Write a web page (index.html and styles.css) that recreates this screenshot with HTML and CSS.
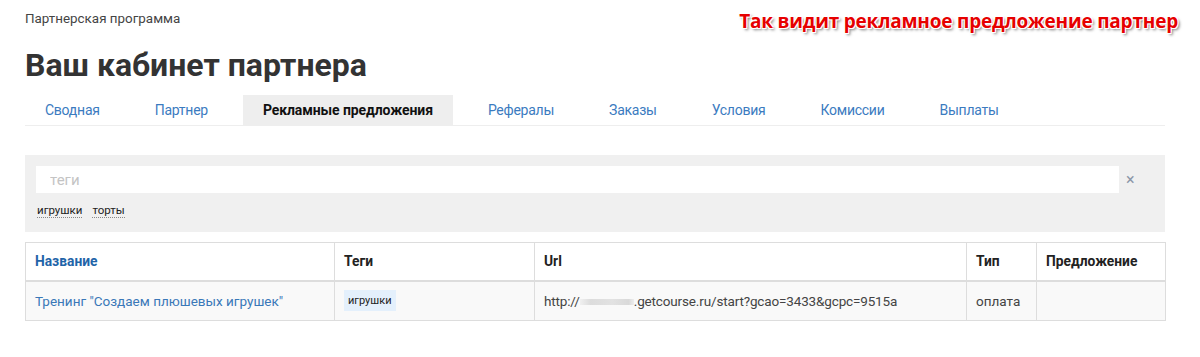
FILE: index.html
```html
<!DOCTYPE html>
<html lang="ru">
<head>
<meta charset="utf-8">
<title>Ваш кабинет партнера</title>
<link rel="stylesheet" href="styles.css">
</head>
<body>
<div class="page">
  <div class="note">Так видит рекламное предложение партнер</div>
  <div class="crumb">Партнерская программа</div>
  <h1 class="title">Ваш кабинет партнера</h1>
  <nav class="tabs">
    <a class="tab">Сводная</a>
    <a class="tab">Партнер</a>
    <a class="tab active">Рекламные предложения</a>
    <a class="tab">Рефералы</a>
    <a class="tab">Заказы</a>
    <a class="tab">Условия</a>
    <a class="tab">Комиссии</a>
    <a class="tab">Выплаты</a>
  </nav>
  <div class="filter">
    <div class="filter-row">
      <input class="filter-input" type="text" placeholder="теги">
      <span class="clear">×</span>
    </div>
    <div class="filter-tags">
      <span class="ftag">игрушки</span>
      <span class="ftag">торты</span>
    </div>
  </div>
  <table class="grid">
    <colgroup>
      <col class="c1"><col class="c2"><col class="c3"><col class="c4"><col class="c5">
    </colgroup>
    <thead>
      <tr>
        <th class="sort">Название</th>
        <th>Теги</th>
        <th>Url</th>
        <th>Тип</th>
        <th>Предложение</th>
      </tr>
    </thead>
    <tbody>
      <tr>
        <td><a class="link">Тренинг "Создаем плюшевых игрушек"</a></td>
        <td><span class="badge">игрушки</span></td>
        <td class="url">http://<span class="blur"></span>.getcourse.ru/start?gcao=3433&amp;gcpc=9515a</td>
        <td>оплата</td>
        <td></td>
      </tr>
    </tbody>
  </table>
</div>
</body>
</html>
```
FILE: styles.css
```css
* { box-sizing: border-box; }
html, body { margin: 0; padding: 0; background: #fff; }
body {
  font-family: Roboto, "Liberation Sans", Arial, sans-serif;
  color: #333;
}
.page {
  position: relative;
  padding: 10px 35px 0 25px;
}
.note {
  position: absolute;
  top: 8px;
  right: 22px;
  font-family: "Open Sans", "Liberation Sans", sans-serif;
  font-weight: 700;
  font-size: 19px;
  letter-spacing: -0.2px;
  color: #e60000;
  text-shadow: -1px -1px 0 #fff, 1px -1px 0 #fff, -1px 1px 0 #fff, 1px 1px 0 #fff,
    2px 2px 3px rgba(0,0,0,0.55);
}
.crumb {
  font-size: 13.4px;
  line-height: 18px;
  color: #444;
}
.title {
  margin: 19px 0 12px;
  font-size: 32px;
  line-height: 36px;
  font-weight: 700;
  color: #333;
}
.tabs {
  display: flex;
  gap: 15px;
  border-bottom: 1px solid #eee;
}
.tab {
  display: block;
  padding: 0 20px;
  height: 30px;
  line-height: 30px;
  font-size: 14px;
  letter-spacing: -0.25px;
  color: #3b7bbf;
}
.tab.active {
  background: #eee;
  color: #111;
  font-weight: 700;
  letter-spacing: -0.1px;
}
.filter {
  margin-top: 29px;
  background: #f0f0f0;
  padding: 11px 0 0 11px;
  height: 77px;
}
.filter-row {
  display: flex;
  align-items: center;
}
.filter-input {
  width: 1083px;
  height: 27px;
  border: 0;
  outline: 0;
  padding: 0 14px;
  background: #fff;
  font-family: inherit;
  font-size: 15px;
  color: #333;
}
.filter-input::placeholder { color: #c4c4c4; }
.clear {
  margin-left: 7px;
  font-size: 16px;
  line-height: 16px;
  color: #8a96a8;
}
.filter-tags {
  display: flex;
  gap: 10px;
  margin-top: 10px;
  padding-left: 1px;
}
.ftag {
  font-size: 11.5px;
  line-height: 14px;
  color: #222;
  border-bottom: 1px dotted #888;
}
.grid {
  margin-top: 10px;
  width: 1140px;
  border-collapse: collapse;
  table-layout: fixed;
  font-size: 13.5px;
}
.c1 { width: 309px; }
.c2 { width: 200px; }
.c3 { width: 432px; }
.c4 { width: 70px; }
.c5 { width: 129px; }
.grid th, .grid td {
  border: 1px solid #ddd;
  padding: 0 9px;
  text-align: left;
  white-space: nowrap;
}
.grid th {
  height: 38px;
  font-size: 13.8px;
  font-weight: 700;
  color: #222;
  border-bottom: 2px solid #ddd;
}
.grid th.sort { color: #1f64a8; }
.grid td {
  height: 40px;
  background: #f9f9f9;
  color: #444;
}
.grid td.url { letter-spacing: -0.15px; }
.link { color: #3a78b8; }
.badge {
  display: inline-block;
  padding: 0 5px 0 4px;
  height: 21px;
  line-height: 21px;
  font-size: 11px;
  color: #222;
  background: #e4f0fc;
}
.blur {
  display: inline-block;
  width: 54px;
  height: 6px;
  vertical-align: 1px;
  background: linear-gradient(90deg, #f0f0f0, #dcdcdc 20%, #e2e2e2 60%, #d9d9d9 90%, #eeeeee);
}
```
